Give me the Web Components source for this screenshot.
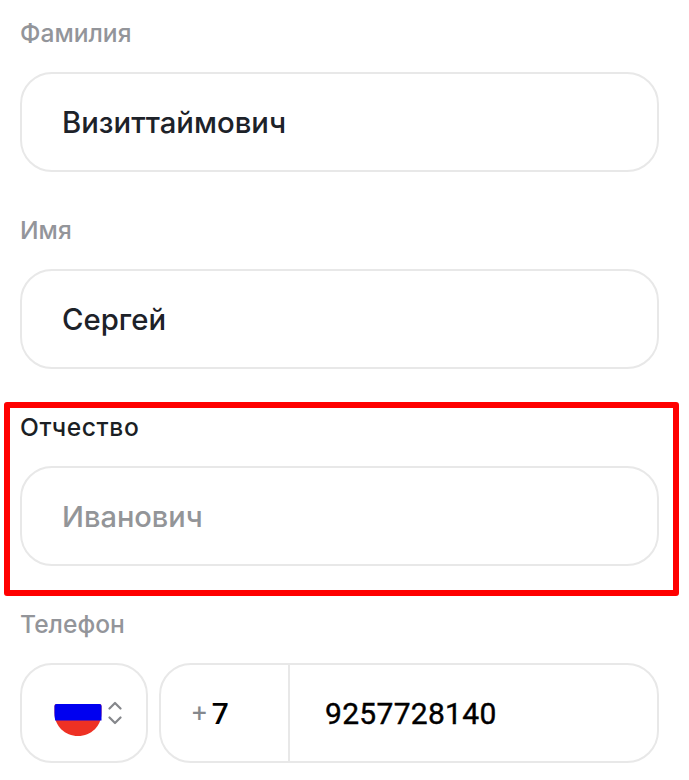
<!DOCTYPE html>
<html lang="ru">
<head>
<meta charset="utf-8">
<title>Форма</title>
<style>
  html, body { margin: 0; padding: 0; background: #fff; }
  body { font-family: Inter, "Noto Sans", sans-serif; height: 780px; overflow: hidden; }
</style>
</head>
<body>
<contact-form>
  <form-field label="Фамилия" value="Визиттаймович"></form-field>
  <form-field label="Имя" value="Сергей"></form-field>
  <form-field label="Отчество" placeholder="Иванович" highlighted></form-field>
  <phone-field label="Телефон" code="7" number="9257728140"></phone-field>
</contact-form>

<script>
class ContactForm extends HTMLElement {
  constructor() {
    super();
    this.attachShadow({ mode: 'open' });
    this.shadowRoot.innerHTML = `
      <style>
        :host {
          display: flex;
          flex-direction: column;
          padding: 19px 30px 0 20px;
        }
        ::slotted(*) { margin-bottom: 44px; }
      </style>
      <slot></slot>
    `;
  }
}

class FormField extends HTMLElement {
  constructor() {
    super();
    this.attachShadow({ mode: 'open' });
  }

  connectedCallback() {
    const label = this.getAttribute('label');
    const value = this.getAttribute('value');
    const placeholder = this.getAttribute('placeholder');
    const on = this.hasAttribute('highlighted');
    this.shadowRoot.innerHTML = `
      <style>
        :host {
          position: relative;
          display: flex;
          flex-direction: column;
          gap: 25px;
        }
        .label {
          height: 28px;
          line-height: 28px;
          font-size: 24.6px;
          font-weight: 450;
          color: #93959a;
        }
        :host([highlighted]) .label {
          color: #1b1f24;
          letter-spacing: 0.6px;
        }
        .box {
          box-sizing: border-box;
          height: 100px;
          display: flex;
          align-items: center;
          padding: 1px 0 0 40px;
          border: 2px solid #e8e8e8;
          border-radius: 32px;
          background: #fff;
          font-size: 29.3px;
          font-weight: 450;
          color: #1d2229;
        }
        .placeholder { color: #939598; font-size: 29px; }
        .mark {
          position: absolute;
          left: -16px;
          right: -20px;
          top: -11px;
          bottom: -30px;
          border: 6px solid #ff0000;
          border-radius: 3px;
          pointer-events: none;
        }
      </style>
      <div class="label">${label}</div>
      <div class="box">${value ? value : `<span class="placeholder">${placeholder}</span>`}</div>
      ${on ? '<div class="mark"></div>' : ''}
    `;
  }
}

class PhoneField extends HTMLElement {
  constructor() {
    super();
    this.attachShadow({ mode: 'open' });
  }

  connectedCallback() {
    this.shadowRoot.innerHTML = `
      <style>
        :host {
          display: flex;
          flex-direction: column;
          gap: 25px;
        }
        .label {
          height: 28px;
          line-height: 28px;
          font-size: 24.6px;
          font-weight: 450;
          color: #93959a;
        }
        .row {
          display: flex;
          gap: 11px;
          height: 100px;
        }
        .country, .phone {
          box-sizing: border-box;
          border: 2px solid #e8e8e8;
          border-radius: 32px;
          display: flex;
          align-items: center;
        }
        .country {
          flex: 0 0 128px;
          gap: 6px;
          padding-left: 32px;
        }
        .flag { margin-top: 14px; }
        .phone { flex: 1; }
        .code {
          box-sizing: border-box;
          flex: 0 0 129px;
          height: 100%;
          display: flex;
          align-items: center;
          gap: 5px;
          padding-left: 31px;
          border-right: 2px solid #e8e8e8;
          font-family: Roboto, sans-serif;
          font-size: 30px;
          font-weight: 500;
          color: #000;
        }
        .plus { color: #85888d; font-weight: 400; font-size: 26px; }
        .number {
          padding-left: 35px;
          font-family: Roboto, sans-serif;
          font-size: 30px;
          font-weight: 400;
          letter-spacing: 0.3px;
          -webkit-text-stroke: 0.4px #000;
          color: #000;
        }
        svg { display: block; }
      </style>
      <div class="label">${this.getAttribute('label')}</div>
      <div class="row">
        <div class="country">
          <svg class="flag" width="48" height="34" viewBox="0 0 48 34">
            <path d="M0.500 3Q0.500 1 2.500 1H45.500Q47.500 1 47.500 3V10C47.500 23 37 33 24 33S0.500 23 0.500 10Z" fill="#ee3124"/>
            <path d="M0.500 3Q0.500 1 2.500 1H45.500Q47.500 1 47.500 3V17.500H1.200Q0.500 14 0.500 10Z" fill="#0000f0"/>
          </svg>
          <svg width="14" height="24" viewBox="0 0 14 24" fill="none" stroke="#85878b" stroke-width="2.200" stroke-linecap="round" stroke-linejoin="round">
            <path d="M1.500 7.500 7 2 12.500 7.500"/>
            <path d="M1.500 16.500 7 22 12.500 16.500"/>
          </svg>
        </div>
        <div class="phone">
          <div class="code"><span class="plus">+</span><span>${this.getAttribute('code')}</span></div>
          <div class="number">${this.getAttribute('number')}</div>
        </div>
      </div>
    `;
  }
}

customElements.define('contact-form', ContactForm);
customElements.define('form-field', FormField);
customElements.define('phone-field', PhoneField);
</script>
</body>
</html>
